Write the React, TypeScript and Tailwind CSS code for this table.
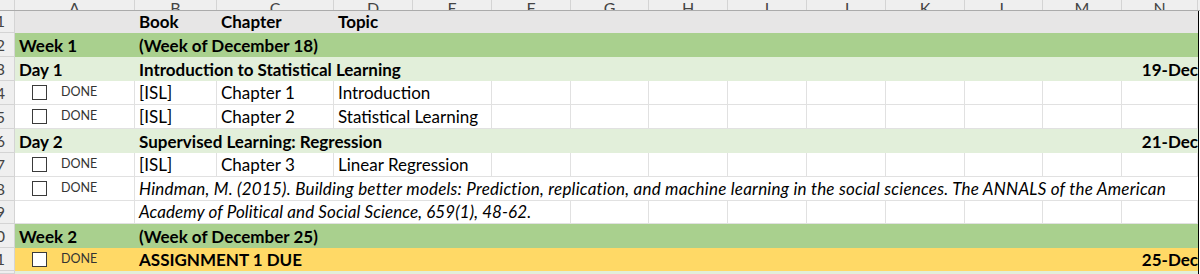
import type { ReactNode } from "react";

const GRID =
  "grid grid-cols-[15px_120px_82px_117px_79px_79px_79px_78px_79px_79px_79px_79px_78px_79px_76px_2px]";

const letters = ["A", "B", "C", "D", "E", "F", "G", "H", "I", "J", "K", "L", "M", "N"];

const line = "border-r border-b border-[#e1e1e1]";

const RowNum = ({ n }: { n: number }) => (
  <div className="flex items-end justify-end overflow-hidden bg-[#efefef] border-r border-b border-[#d4d4d4] pr-[9px] pb-[2px] text-[16px] leading-[18px] text-[#444]">
    <span className="whitespace-nowrap">{n}</span>
  </div>
);

const Edge = () => <div className="border-l border-black bg-white" />;

const Cell = ({
  children,
  className = "",
}: {
  children?: ReactNode;
  className?: string;
}) => (
  <div
    className={`flex items-end whitespace-nowrap overflow-hidden pl-[4px] pb-[2px] leading-[18px] ${className}`}
  >
    {children}
  </div>
);

const Blanks = ({ count }: { count: number }) => (
  <>
    {Array.from({ length: count }).map((_, i) => (
      <div key={i} className={line} />
    ))}
  </>
);

const Done = ({ className = "" }: { className?: string }) => (
  <div className={`flex items-center pl-[17px] ${className}`}>
    <span className="w-[15px] h-[15px] border-[1.5px] border-[#3a3a3a] bg-white" />
    <span className="ml-[14px] text-[12.5px] text-[#333]">DONE</span>
  </div>
);

export default function App() {
  return (
    <div className="w-[1200px] h-[274px] overflow-hidden bg-white text-[17px] text-black font-['Lato',sans-serif]">
      {/* column letters */}
      <div className={`${GRID} h-[11px] bg-[#efefef] border-b border-[#ababab]`}>
        <div className="border-r border-[#d4d4d4]" />
        {letters.map((l) => (
          <div
            key={l}
            className="flex items-end justify-center overflow-hidden border-r border-[#d4d4d4] text-[16px] leading-none text-[#444]"
          >
            <span className="translate-y-[6px]">{l}</span>
          </div>
        ))}
        <div />
      </div>

      {/* 1 */}
      <div className={`${GRID} h-[22px] bg-[#e7e6e6]`}>
        <RowNum n={1} />
        <Cell />
        <Cell className="font-bold">Book</Cell>
        <Cell className="font-bold">Chapter</Cell>
        <Cell className="col-span-11 font-bold">Topic</Cell>
        <Edge />
      </div>

      {/* 2 */}
      <div className={`${GRID} h-[24px] bg-[#a9d08e]`}>
        <RowNum n={2} />
        <Cell className="font-bold">Week 1</Cell>
        <Cell className="col-span-13 font-bold">(Week of December 18)</Cell>
        <Edge />
      </div>

      {/* 3 */}
      <div className={`${GRID} h-[24px] bg-[#e2efda]`}>
        <RowNum n={3} />
        <Cell className="font-bold">Day 1</Cell>
        <Cell className="col-span-12 font-bold">Introduction to Statistical Learning</Cell>
        <Cell className="font-bold justify-end pl-0">19-Dec</Cell>
        <Edge />
      </div>

      {/* 4 */}
      <div className={`${GRID} h-[24px]`}>
        <RowNum n={4} />
        <Done className={line} />
        <Cell className={line}>[ISL]</Cell>
        <Cell className={line}>Chapter 1</Cell>
        <Cell className={`col-span-2 ${line}`}>Introduction</Cell>
        <Blanks count={9} />
        <Edge />
      </div>

      {/* 5 */}
      <div className={`${GRID} h-[24px]`}>
        <RowNum n={5} />
        <Done className={line} />
        <Cell className={line}>[ISL]</Cell>
        <Cell className={line}>Chapter 2</Cell>
        <Cell className={`col-span-2 ${line}`}>Statistical Learning</Cell>
        <Blanks count={9} />
        <Edge />
      </div>

      {/* 6 */}
      <div className={`${GRID} h-[24px] bg-[#e2efda]`}>
        <RowNum n={6} />
        <Cell className="font-bold">Day 2</Cell>
        <Cell className="col-span-12 font-bold">Supervised Learning: Regression</Cell>
        <Cell className="font-bold justify-end pl-0">21-Dec</Cell>
        <Edge />
      </div>

      {/* 7 */}
      <div className={`${GRID} h-[24px]`}>
        <RowNum n={7} />
        <Done className={line} />
        <Cell className={line}>[ISL]</Cell>
        <Cell className={line}>Chapter 3</Cell>
        <Cell className={`col-span-2 ${line}`}>Linear Regression</Cell>
        <Blanks count={9} />
        <Edge />
      </div>

      {/* 8 */}
      <div className={`${GRID} h-[24px]`}>
        <RowNum n={8} />
        <Done className={line} />
        <Cell className="col-span-13 italic tracking-[0.23px] border-b border-[#e1e1e1]">
          Hindman, M. (2015). Building better models: Prediction, replication, and machine learning in the social sciences. The ANNALS of the American
        </Cell>
        <Edge />
      </div>

      {/* 9 */}
      <div className={`${GRID} h-[23px]`}>
        <RowNum n={9} />
        <div className={line} />
        <Cell className={`col-span-5 italic tracking-[0.09px] ${line}`}>
          Academy of Political and Social Science, 659(1), 48-62.
        </Cell>
        <Blanks count={8} />
        <Edge />
      </div>

      {/* 10 */}
      <div className={`${GRID} h-[24px] bg-[#a9d08e]`}>
        <RowNum n={10} />
        <Cell className="font-bold">Week 2</Cell>
        <Cell className="col-span-13 font-bold">(Week of December 25)</Cell>
        <Edge />
      </div>

      {/* 11 */}
      <div className={`${GRID} h-[23px] bg-[#ffd966]`}>
        <RowNum n={11} />
        <Done />
        <Cell className="col-span-12 font-bold">ASSIGNMENT 1 DUE</Cell>
        <Cell className="font-bold justify-end pl-0">25-Dec</Cell>
        <Edge />
      </div>

      {/* 12 */}
      <div className={`${GRID} h-[3px] bg-[#e2efda]`}>
        <RowNum n={12} />
        <div className="col-span-14" />
        <Edge />
      </div>
    </div>
  );
}
